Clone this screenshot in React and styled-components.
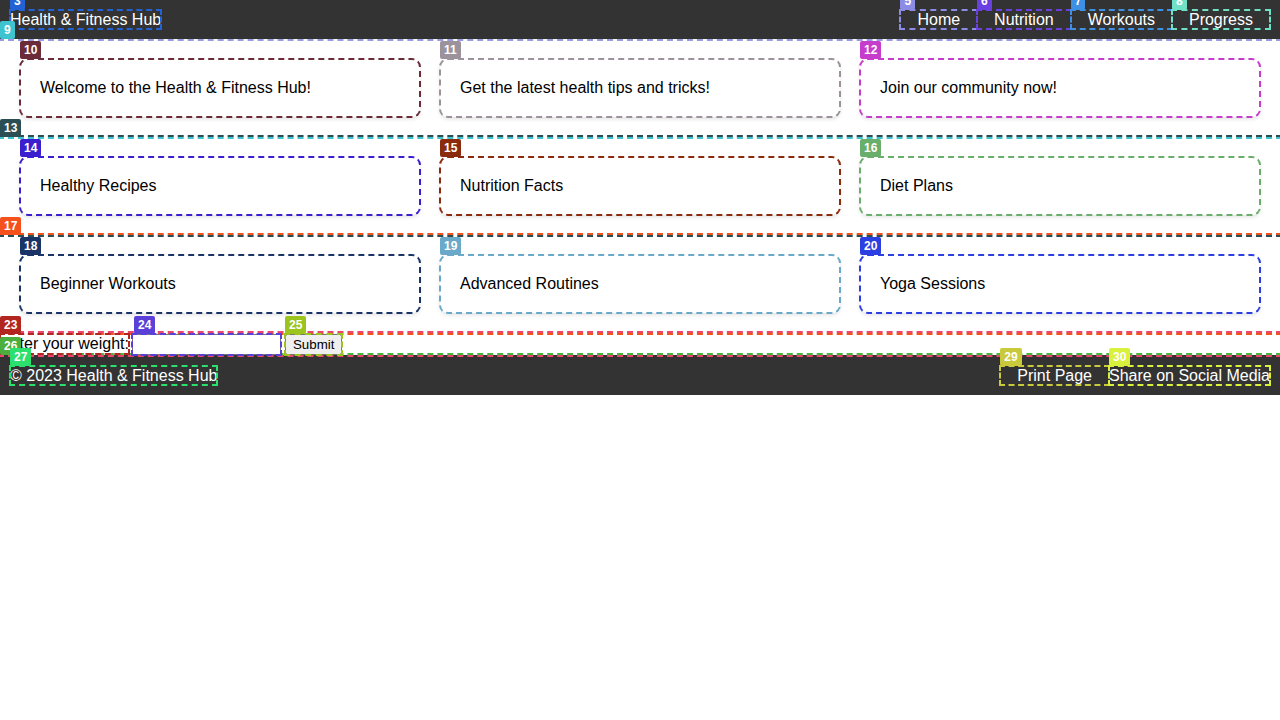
import React from "react";
import styled, { createGlobalStyle, css } from "styled-components";

const Global = createGlobalStyle`
  html, body { margin: 0; padding: 0; background: #fff; }
  body { font-family: "Liberation Sans", Arial, sans-serif; font-size: 16px; color: #000; }
`;

const marked = css`
  position: relative;
  outline: 2px dashed ${(p) => p.$mark || "transparent"};
  outline-offset: ${(p) => (p.$outer ? "0px" : "-1px")};
`;

const Badge = styled.span`
  position: absolute;
  left: 0;
  bottom: 100%;
  z-index: 20;
  height: 18px;
  line-height: 18px;
  padding: 0 4px;
  border-radius: 2px;
  background: ${(p) => p.$c};
  color: #fff;
  font-family: "Liberation Sans", Arial, sans-serif;
  font-size: 12px;
  font-weight: bold;
  white-space: nowrap;
  pointer-events: none;
`;

const Header = styled.header`
  ${marked};
  display: flex;
  justify-content: space-between;
  align-items: center;
  height: 39px;
  padding: 0 10px 1px;
  box-sizing: border-box;
  background: #333;
  color: #fff;
  z-index: 2;
`;

const Logo = styled.div`
  ${marked};
  line-height: 19px;
`;

const Nav = styled.nav`
  display: flex;
`;

const NavLink = styled.a`
  ${marked};
  display: block;
  color: #fff;
  text-decoration: none;
  padding: 0 17px;
  line-height: 19px;
`;

const Section = styled.section`
  ${marked};
  display: grid;
  grid-template-columns: repeat(3, 1fr);
  gap: 20px;
  padding: 20px;
`;

const Card = styled.div`
  ${marked};
  background: #fff;
  border-radius: 8px;
  box-shadow: 0 2px 4px rgba(0, 0, 0, 0.12);
  padding: 20px;
  line-height: normal;
`;

const Form = styled.form`
  ${marked};
  display: flex;
  align-items: center;
  gap: 3px;
  height: 22px;
  z-index: 1;
`;

const Label = styled.label`
  ${marked};
  line-height: 20px;
`;

const FieldWrap = styled.span`
  ${marked};
  display: inline-flex;
  margin-right: ${(p) => p.$gap || 0}px;
`;

const Input = styled.input`
  width: 149px;
  height: 21px;
  box-sizing: border-box;
  font-size: 13.33px;
  margin: 0;
`;

const Button = styled.button`
  font-family: "Liberation Sans", Arial, sans-serif;
  font-size: 13.33px;
  margin: 0;
  padding: 1px 6px;
  height: 21px;
`;

const Footer = styled.footer`
  ${marked};
  display: flex;
  justify-content: space-between;
  align-items: center;
  height: 40px;
  padding: 0 10px;
  box-sizing: border-box;
  background: #333;
  color: #fff;
`;

const FooterText = styled.div`
  ${marked};
  line-height: 19px;
`;

const FooterActions = styled.div`
  display: flex;
  align-items: center;
`;

const PrintButton = styled.button`
  ${marked};
  background: transparent;
  border: none;
  color: #fff;
  font-family: "Liberation Sans", Arial, sans-serif;
  font-size: 16px;
  padding: 0 17px;
  line-height: 19px;
  cursor: pointer;
`;

const ShareLink = styled.a`
  ${marked};
  color: #fff;
  text-decoration: none;
  line-height: 19px;
`;

const navItems = [
  { t: "Home", n: 5, c: "#8c8ce6" },
  { t: "Nutrition", n: 6, c: "#6a40e0" },
  { t: "Workouts", n: 7, c: "#3d90e3" },
  { t: "Progress", n: 8, c: "#70e0c6" },
];

const sections = [
  {
    n: 9,
    c: "#3ec4cf",
    cards: [
      { t: "Welcome to the Health & Fitness Hub!", n: 10, c: "#6b2b38" },
      { t: "Get the latest health tips and tricks!", n: 11, c: "#9b929c" },
      { t: "Join our community now!", n: 12, c: "#c63ccb" },
    ],
  },
  {
    n: 13,
    c: "#2b4e54",
    cards: [
      { t: "Healthy Recipes", n: 14, c: "#3b1fcf" },
      { t: "Nutrition Facts", n: 15, c: "#8a2b0e" },
      { t: "Diet Plans", n: 16, c: "#6aae6c" },
    ],
  },
  {
    n: 17,
    c: "#f5511d",
    cards: [
      { t: "Beginner Workouts", n: 18, c: "#1b3468" },
      { t: "Advanced Routines", n: 19, c: "#6aa9c9" },
      { t: "Yoga Sessions", n: 20, c: "#2c40e2" },
    ],
  },
];

export default function App() {
  return (
    <>
      <Global />
      <Header $mark="#9a9ae0" $outer>
        <Logo $mark="#2262d4">
          <Badge $c="#2262d4">3</Badge>
          Health &amp; Fitness Hub
        </Logo>
        <Nav>
          {navItems.map((i) => (
            <NavLink key={i.t} href="#" $mark={i.c}>
              <Badge $c={i.c}>{i.n}</Badge>
              {i.t}
            </NavLink>
          ))}
        </Nav>
      </Header>
      <main>
        {sections.map((s) => (
          <Section key={s.n} $mark={s.c} $outer>
            <Badge $c={s.c}>{s.n}</Badge>
            {s.cards.map((c) => (
              <Card key={c.n} $mark={c.c}>
                <Badge $c={c.c}>{c.n}</Badge>
                {c.t}
              </Card>
            ))}
          </Section>
        ))}
      </main>
      <Form $mark="#e9456d" $outer onSubmit={(e) => e.preventDefault()}>
        <Label $mark="#b3251f">
          <Badge $c="#b3251f">23</Badge>
          Enter your weight:
        </Label>
        <FieldWrap $mark="#5a40d8" $gap={1}>
          <Badge $c="#5a40d8" style={{ left: 2 }}>24</Badge>
          <Input type="text" />
        </FieldWrap>
        <FieldWrap $mark="#9bc41c">
          <Badge $c="#9bc41c">25</Badge>
          <Button type="submit">Submit</Button>
        </FieldWrap>
      </Form>
      <Footer $mark="#3fb83c" $outer>
        <Badge $c="#4cae3c">26</Badge>
        <FooterText $mark="#2be06c">
          <Badge $c="#2be06c">27</Badge>
          © 2023 Health &amp; Fitness Hub
        </FooterText>
        <FooterActions>
          <PrintButton type="button" $mark="#c9c93c">
            <Badge $c="#c9c93c">29</Badge>
            Print Page
          </PrintButton>
          <ShareLink href="#" $mark="#d9f03c">
            <Badge $c="#d9f03c">30</Badge>
            Share on Social Media
          </ShareLink>
        </FooterActions>
      </Footer>
    </>
  );
}
